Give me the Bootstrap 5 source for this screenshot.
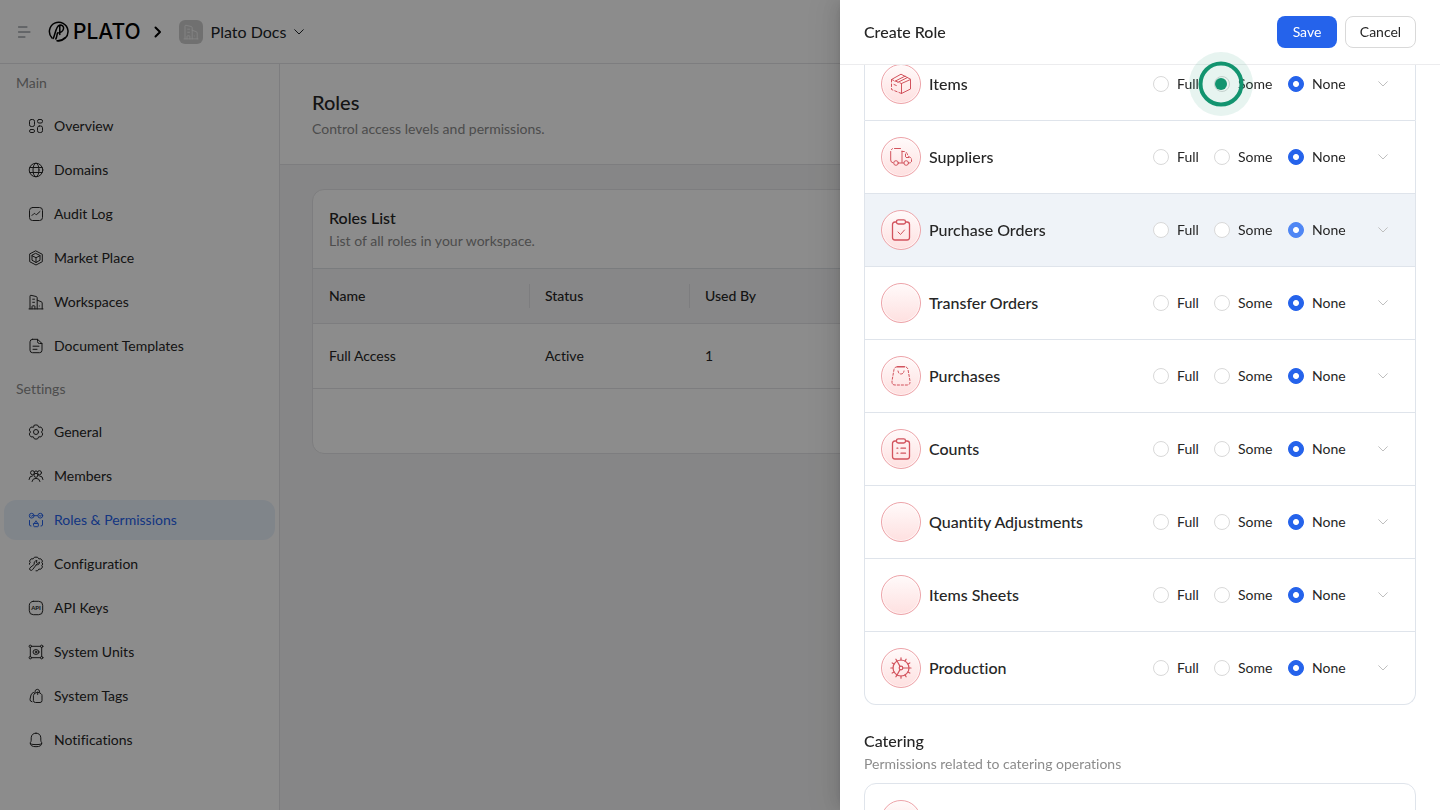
<!DOCTYPE html>
<html lang="en">
<head>
<meta charset="utf-8">
<meta name="viewport" content="width=device-width, initial-scale=1">
<title>Create Role</title>
<link href="https://cdn.jsdelivr.net/npm/bootstrap@5.3.0/dist/css/bootstrap.min.css" rel="stylesheet">
<style>
  :root { --line: #e4e4e7; --drawer-line: #dfe4eb; --ink: #262626; --muted: #8c8c8c; --brand: #2563eb; }
  body { font-family: Lato, "Noto Sans", sans-serif; font-size: 14px; line-height: 22px; color: var(--ink); background: #f5f5f6; font-variant-ligatures: none; }
  svg { display: block; flex: none; fill: none; stroke: currentColor; stroke-linecap: round; stroke-linejoin: round; }
  .text-soft { color: var(--muted); }
  .title-md { font-size: 16px; line-height: 24px; font-weight: 500; margin: 0; }
  .title-lg { font-size: 20px; line-height: 28px; font-weight: 500; margin: 0; }

  .app-bar { height: 64px; background: #fff; border-bottom: 1px solid var(--line); }
  .brand-link, .brand-link:hover { color: #000; }
  .wordmark { font-family: Inter, sans-serif; font-size: 21px; line-height: 24px; font-weight: 500; }
  .workspace-tile { width: 24px; height: 24px; border-radius: 6px; background: #cdcdcd; color: #f5f5f5; }

  .side-bar { width: 280px; flex: none; gap: 4px; padding: 0 4px; background: #fff; border-right: 1px solid var(--line); }
  .side-label { line-height: 38px; padding-left: 12px; color: var(--muted); }
  .side-bar .nav-link { height: 40px; padding: 0 24px; gap: 10px; border-radius: 12px; color: var(--ink); }
  .side-bar .nav-link.active { background: #eaf2fc; color: var(--brand); }

  .page-head { padding: 24px 32px; gap: 2px; background: #fff; border-bottom: 1px solid var(--line); }
  .page-body { padding: 24px 32px; }
  .roles-card { border: 1px solid var(--line); border-radius: 12px; overflow: hidden; }
  .roles-table { table-layout: fixed; margin: 0; color: var(--ink); }
  .roles-table th, .roles-table td { padding: 0 16px; border-color: var(--line); vertical-align: middle; }
  .roles-table th { height: 55px; background: #f6f6f7; font-weight: 500; position: relative; }
  .roles-table th + th::before { content: ""; position: absolute; left: 0; top: 15px; bottom: 15px; border-left: 1px solid var(--line); }
  .roles-table td { height: 65px; }
  .roles-foot { height: 64px; }

  .offcanvas-backdrop.show { opacity: .45; }
  .role-drawer.offcanvas { --bs-offcanvas-width: 600px; border: 0; color: var(--ink); max-width: 100%;
    box-shadow: -6px 0 16px rgba(0,0,0,.08), -3px 0 6px -4px rgba(0,0,0,.12), -9px 0 28px 8px rgba(0,0,0,.05); }
  .drawer-head { height: 65px; padding: 0 24px; border-bottom: 1px solid #ececee; }
  .drawer-head .btn { height: 32px; padding: 0; font-size: 14px; line-height: 22px; border-radius: 8px; }
  .btn-save { width: 60px; background: var(--brand); color: #fff; }
  .btn-cancel { width: 71px; background: #fff; border-color: #d9d9d9; color: var(--ink); }
  .drawer-body { padding: 0 24px; scrollbar-width: none; }
  .perm-list { --bs-list-group-border-color: var(--drawer-line); --bs-list-group-border-radius: 12px; --bs-list-group-color: var(--ink); }
  .perm-list-scrolled { margin-top: -18px; }
  .perm-list .list-group-item { padding: 16px; }
  .perm-list .is-hovered { background: #eff3f8; }
  .perm-icon { width: 40px; height: 40px; border: 1px solid #eda3a8; border-radius: 50%; color: #d2535d;
    background: linear-gradient(#fffafa, #fee0e0); box-shadow: inset 0 0 0 1px rgba(255,255,255,.6); }
  .perm-choices { display: grid; grid-template-columns: 61px 74px 71px; }
  .perm-choices .form-check-input { width: 16px; height: 16px; margin: 0; border-color: #d9d9d9; }
  .perm-choices .form-check-input:checked { border-color: var(--brand); background: var(--brand) radial-gradient(circle, #fff 2.5px, transparent 3.5px); }
  .is-hovered .form-check-input:checked { border-color: #4f86f4; background-color: #4f86f4; }
  .btn-expand { width: 32px; height: 32px; padding: 0; border: 0; color: #bfbfbf; }
  .section-head { padding: 24px 0 8px; }

  .click-halo { position: absolute; top: 52px; right: 187px; width: 64px; height: 64px; pointer-events: none; z-index: 2; color: #12946f; }
  .click-halo .halo-fill { fill: currentColor; stroke: none; }
</style>
</head>
<body class="d-flex flex-column min-vh-100">

<svg width="0" height="0" class="position-absolute" aria-hidden="true">
  <symbol id="building" viewBox="0 0 16 16"><path d="M1 14.900h14M2 14.900V2.200Q2 1.100 3 1.300l5.200 1.200q1 .3 1 1.300V14.900M9.200 6.200l4 1.500q1 .4 1 1.300v5.900M4 14.900V12.500q0-.7.7-.7h1.500q.7 0 .7.7v2.400M4.700 5.200h1.800M4.700 8.300h1.800M11.300 12v0"/></symbol>
  <symbol id="chev" viewBox="0 0 10 6"><path d="M.7.7 5 5 9.300.7"/></symbol>
</svg>

<header class="app-bar d-flex align-items-center ps-3">
  <button type="button" class="btn p-0 border-0 text-secondary me-3" aria-label="Toggle menu"><svg width="16" height="16" viewBox="0 0 16 16"><path d="M2.500 3h8.500M2.500 8h11.500M2.500 13h6.500"/></svg></button>
  <a href="#" class="brand-link d-flex align-items-center text-decoration-none gap-1" aria-label="Plato home">
    <svg width="21" height="21" viewBox="0 0 21 21" stroke-width="1.500"><path d="M4 17A9.300 9.300 0 1 1 9 19.700c3 .2 6-.9 7.800-3"/><path d="M5.200 17.500C7.200 13.500 8 5 11.300 4.200c2.700-.6 4.800 1.200 4.200 3.700-.6 2.600-3.500 3.900-6 4.200M11.800 5v8.500M7.800 18c1-1.500 1-3.700 1.600-5.900"/></svg>
    <span class="wordmark">PLATO</span>
  </a>
  <svg class="ms-2 me-3 text-black" width="14" height="14" viewBox="0 0 14 14" stroke-width="2"><path d="m6.500 2.500 4.500 4.500-4.500 4.500"/></svg>
  <button type="button" class="btn d-flex align-items-center gap-2 p-0 border-0">
    <span class="workspace-tile d-flex align-items-center justify-content-center"><svg width="16" height="16" stroke-width=".8"><use href="#building"/></svg></span>
    <span class="app-name">Plato Docs</span>
    <svg width="10" height="6"><use href="#chev"/></svg>
  </button>
</header>

<div class="d-flex align-items-stretch flex-grow-1">
  <nav class="side-bar nav flex-column flex-nowrap" aria-label="Workspace">
    <div class="side-label">Main</div>
    <a href="#" class="nav-link d-flex align-items-center"><svg width="16" height="16" viewBox="0 0 16 16"><rect x="1.500" y="1.500" width="5" height="7" rx="1.800"/><rect x="9.500" y="1.500" width="5" height="3.500" rx="1.500"/><rect x="9.500" y="8" width="5" height="6.500" rx="1.800"/><rect x="1.500" y="11.500" width="5" height="3" rx="1.400"/></svg>Overview</a>
    <a href="#" class="nav-link d-flex align-items-center"><svg width="16" height="16" viewBox="0 0 16 16"><circle cx="8" cy="8" r="6.800"/><ellipse cx="8" cy="8" rx="3" ry="6.800"/><path d="M1.800 5.500h12.400M1.800 10.500h12.400"/></svg>Domains</a>
    <a href="#" class="nav-link d-flex align-items-center"><svg width="16" height="16" viewBox="0 0 16 16"><rect x="1.500" y="1.500" width="13" height="13" rx="3"/><path d="m4 9.500 1.700-1.700q.7-.7 1.400 0l.5.500q.7.600 1.300 0L12 5.500"/></svg>Audit Log</a>
    <a href="#" class="nav-link d-flex align-items-center"><svg width="16" height="16" viewBox="0 0 16 16"><path d="m8 1 6.300 3.300v7.400L8 15l-6.300-3.300V4.300z"/><path d="m8 3.500 4 2v4.700l-4 2.300-4-2.300V5.500zM4 5.700l4 2 4-2M8 7.700v4.800"/></svg>Market Place</a>
    <a href="#" class="nav-link d-flex align-items-center"><svg width="16" height="16"><use href="#building"/></svg>Workspaces</a>
    <a href="#" class="nav-link d-flex align-items-center"><svg width="16" height="16" viewBox="0 0 16 16"><path d="M4.500 1.300h5L14 5.500v6.700q0 2.500-2.500 2.500h-7Q2 14.700 2 12.200V3.800q0-2.500 2.500-2.500zM9.500 1.500v2q0 2 2 2H14M5 8.200h6M5 11.300h4"/></svg>Document Templates</a>
    <div class="side-label">Settings</div>
    <a href="#" class="nav-link d-flex align-items-center"><svg width="16" height="16" viewBox="0 0 16 16"><path d="M6.300 1.200Q8 .6 9.700 1.200L10.700 3.200 13 3.100Q14.300 4.300 14.700 6.100L13.500 8l1.200 1.900Q14.300 11.700 13 12.900l-2.300-.1-1 2Q8 15.400 6.300 14.800l-1-2-2.300.1Q1.700 11.700 1.300 9.900L2.500 8 1.300 6.100Q1.700 4.300 3 3.100l2.300.1z"/><circle cx="8" cy="8" r="2.500"/></svg>General</a>
    <a href="#" class="nav-link d-flex align-items-center"><svg width="16" height="16" viewBox="0 0 16 16"><circle cx="4.500" cy="4.700" r="2"/><circle cx="11.500" cy="4.700" r="2"/><circle cx="8" cy="7.300" r="2"/><path d="M1 11.500q0-3.500 3.500-3.700M15 11.500q0-3.500-3.500-3.700M4 13.500q.5-3.200 4-3.200t4 3.200M6.500 3.500q1.500-1.500 3 0"/></svg>Members</a>
    <a href="#" class="nav-link active d-flex align-items-center" aria-current="page"><svg width="16" height="16" viewBox="0 0 16 16"><circle cx="3.700" cy="3.700" r="2.400"/><circle cx="12.300" cy="3.700" r="2.400"/><path d="m3 3.700.7.700 1-1.300M11.600 3.700l.7.700 1-1.300M6.500 3.700h3M1.500 8.500V13q0 1 1.500 1M14.500 8.500V13q0 1-1.500 1M8 9.300q1.600.5 1.500 2.200H6.500Q6.400 9.800 8 9.300zM5.700 11.500h4.600V14q0 .7-.7.7H6.400q-.7 0-.7-.7z"/></svg>Roles &amp; Permissions</a>
    <a href="#" class="nav-link d-flex align-items-center"><svg width="16" height="16" viewBox="0 0 16 16"><path d="M1.800 8.500 1.200 8l1-1.500L1.500 5l1.700-2.200 1.900.1L6.500 1.200h3l1.400 1.700 1.900-.1L14.500 5l-.7 1.500 1 1.500-1 1.500.7 1.500-1.700 2.200-1.900-.1-1.400 1.700H8"/><path d="M8.300 8.800 4.500 13.700q-1 1.200-2.300.4-1.300-1.200-.2-2.300l4.300-3.500Q5.500 5 9 4.500l-.7 2 1.500 1 1.700-1.400q.3 3-3.200 2.700z"/></svg>Configuration</a>
    <a href="#" class="nav-link d-flex align-items-center"><svg width="16" height="16" viewBox="0 0 16 16"><rect x="1.300" y="1.300" width="13.400" height="13.400" rx="4"/><text x="8" y="10" text-anchor="middle" font-size="6" font-weight="700" fill="currentColor" stroke="none">API</text></svg>API Keys</a>
    <a href="#" class="nav-link d-flex align-items-center"><svg width="16" height="16" viewBox="0 0 16 16"><circle cx="2.300" cy="2.300" r="1.200"/><circle cx="13.700" cy="2.300" r="1.200"/><circle cx="2.300" cy="13.700" r="1.200"/><circle cx="13.700" cy="13.700" r="1.200"/><path d="M3.500 2.300h9M3.500 13.700h9M2.300 3.500v9M13.700 3.500v9"/><ellipse cx="8" cy="8" rx="3" ry="2.400"/><circle cx="8" cy="8" r=".8"/></svg>System Units</a>
    <a href="#" class="nav-link d-flex align-items-center"><svg width="16" height="16" viewBox="0 0 16 16"><path d="m6.300 5.800 1.600-1q1.800-1 3.600 0l1.600 1q.9.600.9 1.700v5q0 2-2 2H7.400q-2 0-2-2v-5q0-1.100.9-1.700zM9.700 6.500V4M4 13.800q-2.300-.3-2-2.600l1-4.200q.5-1.800 2.500-2.600M6.800 4.500q0-3.200 2.500-3.200t2.400 3"/></svg>System Tags</a>
    <a href="#" class="nav-link d-flex align-items-center"><svg width="16" height="16" viewBox="0 0 16 16"><path d="M8 1.200q4.500 0 4.800 4.600v2.400q0 1.300.8 2.200 1.500 2.200-5.600 2.200t-5.600-2.200q.8-.9.8-2.200V5.800Q3.500 1.200 8 1.200zM2.300 11.300q-.3 3.400 5.700 3.400t5.700-3.400"/></svg>Notifications</a>
  </nav>

  <main class="flex-grow-1">
    <div class="page-head d-flex flex-column">
      <h1 class="title-lg">Roles</h1>
      <div class="text-soft">Control access levels and permissions.</div>
    </div>
    <div class="page-body">
      <section class="roles-card bg-white">
        <div class="p-3">
          <h2 class="title-md">Roles List</h2>
          <div class="text-soft">List of all roles in your workspace.</div>
        </div>
        <table class="table roles-table border-top">
          <colgroup><col width="216"><col width="160"><col></colgroup>
          <thead><tr><th scope="col">Name</th><th scope="col">Status</th><th scope="col">Used By</th></tr></thead>
          <tbody><tr><td>Full Access</td><td>Active</td><td>1</td></tr></tbody>
        </table>
        <div class="roles-foot"></div>
      </section>
    </div>
  </main>
</div>

<div class="offcanvas-backdrop show"></div>

<!-- The page supplies its own backdrop, so the component must not add a second one -->
<aside class="offcanvas offcanvas-end show role-drawer" data-bs-backdrop="false" tabindex="-1" aria-labelledby="drawerTitle">
  <div class="drawer-head d-flex align-items-center gap-2 flex-shrink-0">
    <h2 class="title-md me-auto" id="drawerTitle">Create Role</h2>
    <button type="button" class="btn btn-save">Save</button>
    <button type="button" class="btn btn-cancel">Cancel</button>
  </div>

  <div class="drawer-body overflow-auto flex-grow-1">
    <ul class="list-group perm-list perm-list-scrolled">
      <li class="list-group-item d-flex align-items-center gap-2">
        <span class="perm-icon d-flex align-items-center justify-content-center"><svg width="22" height="22" viewBox="0 0 22 22"><path d="M11.500 10.500v10M11.500 10.500l9-4v9.500l-9 4.500M1.500 6.500 11 1.200l9.500 5M5 8.200l10-5M8 9.300l9.500-4.800"/><path d="M1.500 6.500v10l10 4M1.500 6.500l10 4M4 11.500l3.500 1.500" stroke-dasharray="2.500 2"/></svg></span>
        <h3 class="title-md me-auto">Items</h3>
        <div class="perm-choices" role="radiogroup" aria-label="Items">
          <label class="d-flex align-items-center gap-2"><input class="form-check-input" type="radio" name="items">Full</label>
          <label class="d-flex align-items-center gap-2"><input class="form-check-input" type="radio" name="items">Some</label>
          <label class="d-flex align-items-center gap-2"><input class="form-check-input" type="radio" name="items" checked>None</label>
        </div>
        <button type="button" class="btn btn-expand d-flex align-items-center justify-content-center" aria-label="Expand Items"><svg width="10" height="6"><use href="#chev"/></svg></button>
      </li>
      <li class="list-group-item d-flex align-items-center gap-2">
        <span class="perm-icon d-flex align-items-center justify-content-center"><svg width="22" height="22" viewBox="0 0 22 22"><circle cx="6" cy="17" r="2.300"/><circle cx="16.200" cy="17" r="2.300"/><path d="M.7 5.500V14q0 2.500 2 2.800M4.500 2.500h6M12 5v11.500M8.300 17h5.600"/><path d="M12 5.500h2q2 0 3 2l1.500 3 2 1q1 .5 1 2v2q0 1.500-3 1.500M15.500 8v3.500h4M1.500 3.500l1-.8" stroke-dasharray="2.500 1.800"/></svg></span>
        <h3 class="title-md me-auto">Suppliers</h3>
        <div class="perm-choices" role="radiogroup" aria-label="Suppliers">
          <label class="d-flex align-items-center gap-2"><input class="form-check-input" type="radio" name="suppliers">Full</label>
          <label class="d-flex align-items-center gap-2"><input class="form-check-input" type="radio" name="suppliers">Some</label>
          <label class="d-flex align-items-center gap-2"><input class="form-check-input" type="radio" name="suppliers" checked>None</label>
        </div>
        <button type="button" class="btn btn-expand d-flex align-items-center justify-content-center" aria-label="Expand Suppliers"><svg width="10" height="6"><use href="#chev"/></svg></button>
      </li>
      <li class="list-group-item is-hovered d-flex align-items-center gap-2">
        <span class="perm-icon d-flex align-items-center justify-content-center"><svg width="22" height="22" viewBox="0 0 22 22" stroke-width="1.300"><path d="M6.500 3H5Q2.500 3 2.500 5.500v13Q2.500 21 5 21h12q2.500 0 2.500-2.500v-13Q19.500 3 17 3h-1.500"/><rect x="6.500" y=".8" width="9" height="4.200" rx="1.800"/><path d="m8 13 2.500 2.500L14.500 11" stroke-width="1"/></svg></span>
        <h3 class="title-md me-auto">Purchase Orders</h3>
        <div class="perm-choices" role="radiogroup" aria-label="Purchase Orders">
          <label class="d-flex align-items-center gap-2"><input class="form-check-input" type="radio" name="purchase-orders">Full</label>
          <label class="d-flex align-items-center gap-2"><input class="form-check-input" type="radio" name="purchase-orders">Some</label>
          <label class="d-flex align-items-center gap-2"><input class="form-check-input" type="radio" name="purchase-orders" checked>None</label>
        </div>
        <button type="button" class="btn btn-expand d-flex align-items-center justify-content-center" aria-label="Expand Purchase Orders"><svg width="10" height="6"><use href="#chev"/></svg></button>
      </li>
      <li class="list-group-item d-flex align-items-center gap-2">
        <span class="perm-icon"></span>
        <h3 class="title-md me-auto">Transfer Orders</h3>
        <div class="perm-choices" role="radiogroup" aria-label="Transfer Orders">
          <label class="d-flex align-items-center gap-2"><input class="form-check-input" type="radio" name="transfer-orders">Full</label>
          <label class="d-flex align-items-center gap-2"><input class="form-check-input" type="radio" name="transfer-orders">Some</label>
          <label class="d-flex align-items-center gap-2"><input class="form-check-input" type="radio" name="transfer-orders" checked>None</label>
        </div>
        <button type="button" class="btn btn-expand d-flex align-items-center justify-content-center" aria-label="Expand Transfer Orders"><svg width="10" height="6"><use href="#chev"/></svg></button>
      </li>
      <li class="list-group-item d-flex align-items-center gap-2">
        <span class="perm-icon d-flex align-items-center justify-content-center"><svg width="22" height="22" viewBox="0 0 22 22"><path d="M7.500 1.800h7" stroke-width="1.500"/><path d="M7 1.800Q4.500 2 4 4.500L2 16q-.5 4 3 4h12q3.500 0 3-4L18 4.500q-.5-2.500-3-2.700M8 6q.5 3 3 3t3-3" stroke-dasharray="2.200 1.800"/></svg></span>
        <h3 class="title-md me-auto">Purchases</h3>
        <div class="perm-choices" role="radiogroup" aria-label="Purchases">
          <label class="d-flex align-items-center gap-2"><input class="form-check-input" type="radio" name="purchases">Full</label>
          <label class="d-flex align-items-center gap-2"><input class="form-check-input" type="radio" name="purchases">Some</label>
          <label class="d-flex align-items-center gap-2"><input class="form-check-input" type="radio" name="purchases" checked>None</label>
        </div>
        <button type="button" class="btn btn-expand d-flex align-items-center justify-content-center" aria-label="Expand Purchases"><svg width="10" height="6"><use href="#chev"/></svg></button>
      </li>
      <li class="list-group-item d-flex align-items-center gap-2">
        <span class="perm-icon d-flex align-items-center justify-content-center"><svg width="22" height="22" viewBox="0 0 22 22" stroke-width="1.300"><path d="M6.500 3H5Q2.500 3 2.500 5.500v13Q2.500 21 5 21h12q2.500 0 2.500-2.500v-13Q19.500 3 17 3h-1.500"/><rect x="6.500" y=".8" width="9" height="4.200" rx="1.800"/><path d="M7 10.200h.8M11 10.200h4.500M7 15.200h.8M11 15.200h4.500"/></svg></span>
        <h3 class="title-md me-auto">Counts</h3>
        <div class="perm-choices" role="radiogroup" aria-label="Counts">
          <label class="d-flex align-items-center gap-2"><input class="form-check-input" type="radio" name="counts">Full</label>
          <label class="d-flex align-items-center gap-2"><input class="form-check-input" type="radio" name="counts">Some</label>
          <label class="d-flex align-items-center gap-2"><input class="form-check-input" type="radio" name="counts" checked>None</label>
        </div>
        <button type="button" class="btn btn-expand d-flex align-items-center justify-content-center" aria-label="Expand Counts"><svg width="10" height="6"><use href="#chev"/></svg></button>
      </li>
      <li class="list-group-item d-flex align-items-center gap-2">
        <span class="perm-icon"></span>
        <h3 class="title-md me-auto">Quantity Adjustments</h3>
        <div class="perm-choices" role="radiogroup" aria-label="Quantity Adjustments">
          <label class="d-flex align-items-center gap-2"><input class="form-check-input" type="radio" name="adjustments">Full</label>
          <label class="d-flex align-items-center gap-2"><input class="form-check-input" type="radio" name="adjustments">Some</label>
          <label class="d-flex align-items-center gap-2"><input class="form-check-input" type="radio" name="adjustments" checked>None</label>
        </div>
        <button type="button" class="btn btn-expand d-flex align-items-center justify-content-center" aria-label="Expand Quantity Adjustments"><svg width="10" height="6"><use href="#chev"/></svg></button>
      </li>
      <li class="list-group-item d-flex align-items-center gap-2">
        <span class="perm-icon"></span>
        <h3 class="title-md me-auto">Items Sheets</h3>
        <div class="perm-choices" role="radiogroup" aria-label="Items Sheets">
          <label class="d-flex align-items-center gap-2"><input class="form-check-input" type="radio" name="sheets">Full</label>
          <label class="d-flex align-items-center gap-2"><input class="form-check-input" type="radio" name="sheets">Some</label>
          <label class="d-flex align-items-center gap-2"><input class="form-check-input" type="radio" name="sheets" checked>None</label>
        </div>
        <button type="button" class="btn btn-expand d-flex align-items-center justify-content-center" aria-label="Expand Items Sheets"><svg width="10" height="6"><use href="#chev"/></svg></button>
      </li>
      <li class="list-group-item d-flex align-items-center gap-2">
        <span class="perm-icon d-flex align-items-center justify-content-center"><svg width="22" height="22" viewBox="0 0 22 22" stroke-width="1.200"><circle cx="11" cy="11" r="8"/><circle cx="11" cy="11" r="1.800"/><path d="M13 11h8M10 9.400 6.500 3M10 12.600 6.500 19M11 .8V3M11 19v2.200M.8 11H3M16.100 2.200 15 4.100M19.800 5.900 17.900 7M19.800 16.100 17.900 15M16.100 19.800 15 17.900M5.900 2.200 7 4.100M2.200 5.900 4.100 7M2.200 16.100 4.100 15M5.900 19.800 7 17.900"/></svg></span>
        <h3 class="title-md me-auto">Production</h3>
        <div class="perm-choices" role="radiogroup" aria-label="Production">
          <label class="d-flex align-items-center gap-2"><input class="form-check-input" type="radio" name="production">Full</label>
          <label class="d-flex align-items-center gap-2"><input class="form-check-input" type="radio" name="production">Some</label>
          <label class="d-flex align-items-center gap-2"><input class="form-check-input" type="radio" name="production" checked>None</label>
        </div>
        <button type="button" class="btn btn-expand d-flex align-items-center justify-content-center" aria-label="Expand Production"><svg width="10" height="6"><use href="#chev"/></svg></button>
      </li>
    </ul>

    <div class="section-head">
      <h3 class="title-md">Catering</h3>
      <div class="text-soft">Permissions related to catering operations</div>
    </div>
    <ul class="list-group perm-list">
      <li class="list-group-item"><span class="perm-icon d-block"></span></li>
    </ul>
  </div>

  <svg class="click-halo" viewBox="0 0 64 64" aria-hidden="true"><circle class="halo-fill" cx="32" cy="32" r="32" fill-opacity=".1"/><circle cx="32" cy="32" r="20.500" stroke-width="4"/><circle class="halo-fill" cx="32" cy="32" r="6"/></svg>
</aside>

<script src="https://cdn.jsdelivr.net/npm/bootstrap@5.3.0/dist/js/bootstrap.bundle.min.js"></script>
</body>
</html>
